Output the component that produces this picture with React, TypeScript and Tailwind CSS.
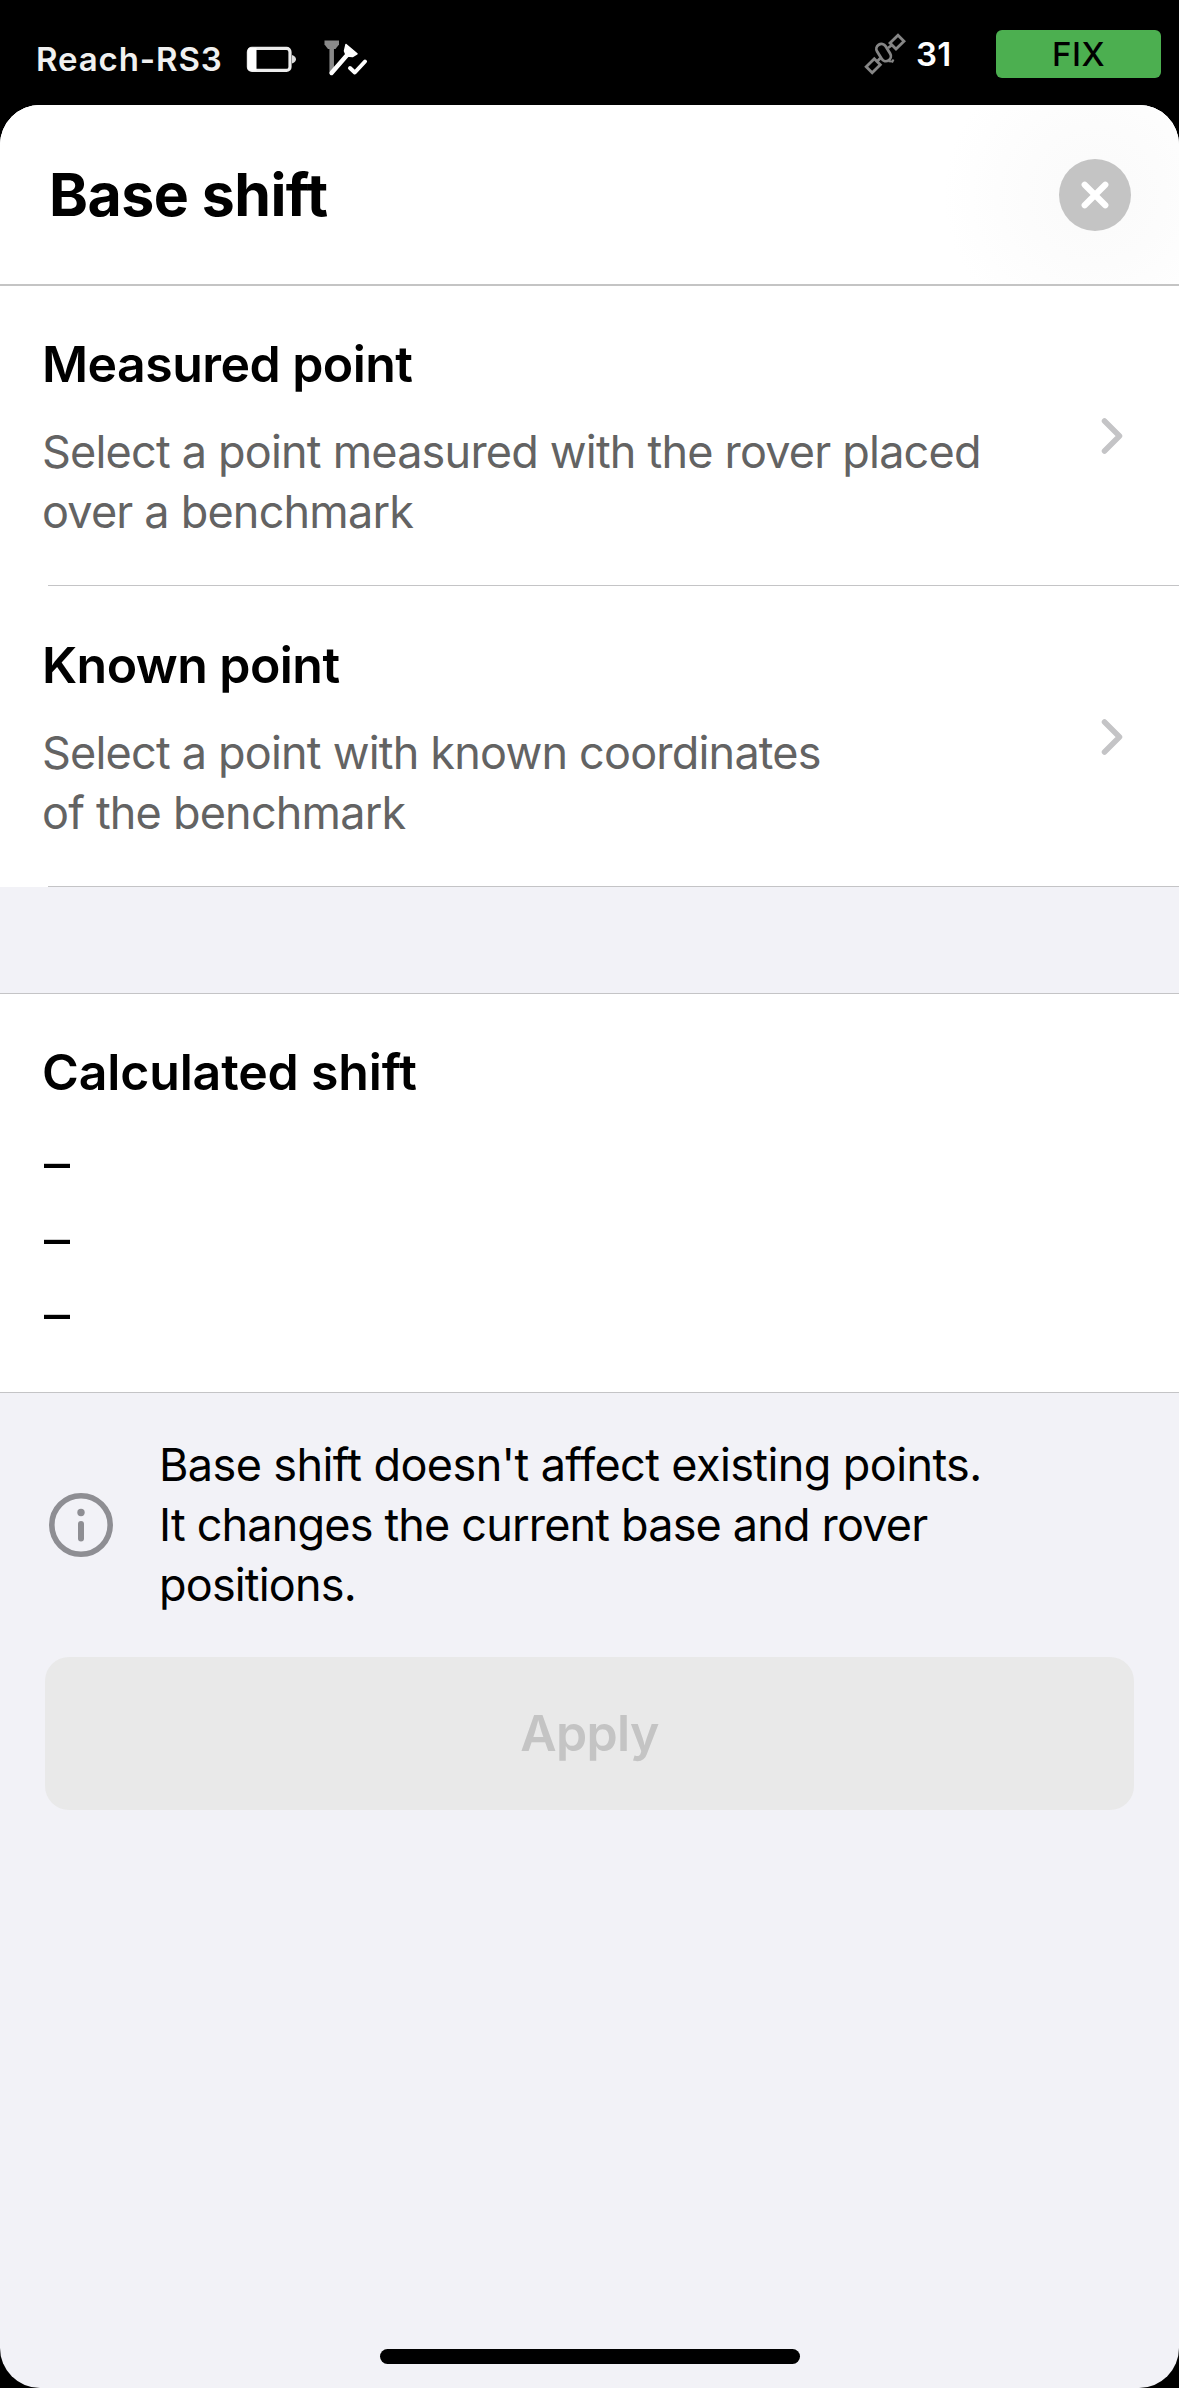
import React from 'react';

const BatteryIcon = () => (
  <svg width="50" height="26" viewBox="0 0 50 26" fill="none" className="shrink-0">
    <rect x="2.400" y="2.400" width="41.600" height="22" rx="3.500" stroke="#ececec" strokeWidth="3.200" />
    <path d="M4 2h6.500v22.500H4a2 2 0 0 1-2-2V4a2 2 0 0 1 2-2z" fill="#fff" />
    <path d="M46 9c2.500.8 4 2.400 4 4.200s-1.500 3.400-4 4.200z" fill="#ddd" />
  </svg>
);

const PoleIcon = () => (
  <svg width="46" height="40" viewBox="0 0 46 40" fill="none" strokeLinecap="round" strokeLinejoin="round" className="shrink-0">
    <path d="M0.500 1.500h14.500v4l-3.500 4.500H4L0.500 5.500z" fill="#8a8a8a" />
    <path d="M7.700 9v23" stroke="#8a8a8a" strokeWidth="4.500" />
    <path d="M22 5.500L33 14.800L28.500 17.500L22.500 17L20.500 12z" fill="#fff" stroke="#fff" strokeWidth="1.500" />
    <path d="M24 15L7.500 34" stroke="#fff" strokeWidth="4.400" />
    <path d="M26 29l4.800 4.500L41 22.500" stroke="#fff" strokeWidth="4" />
  </svg>
);

const SatelliteIcon = () => (
  <svg width="42" height="42" viewBox="0 0 42 42" fill="none" stroke="#868686" strokeWidth="2.800" className="shrink-0">
    <path d="M34 2.200L40 8.200L32 16L26 10z" />
    <path d="M10.300 25.800L16.300 31.800L8.200 39.800L2.200 33.800z" />
    <rect x="14.600" y="10.300" width="10" height="18.500" rx="5" transform="rotate(-32 19.600 19.500)" />
    <path d="M24 15l4-3M13.500 28l3-3" />
    <path d="M24.500 28.200l4 .3M29.500 26.500l-1.500 3" strokeWidth="2" />
  </svg>
);

const CloseIcon = () => (
  <svg width="28" height="28" viewBox="0 0 28 28" stroke="#fff" strokeWidth="6.200" strokeLinecap="round">
    <path d="M3.700 3.700l20.600 20.600M24.300 3.700L3.700 24.300" />
  </svg>
);

const Chevron = () => (
  <svg width="22" height="38" viewBox="0 0 22 38" fill="none" stroke="#c4c4c6" strokeWidth="5.500" strokeLinecap="round" strokeLinejoin="round">
    <path d="M3.500 4l15 15-15 15" />
  </svg>
);

const InfoIcon = () => (
  <svg width="64" height="64" viewBox="0 0 64 64" fill="none">
    <circle cx="32" cy="32" r="29.200" stroke="#8e8e93" strokeWidth="5.600" />
    <circle cx="32" cy="19.500" r="3.700" fill="#8e8e93" />
    <path d="M32 31v14.500" stroke="#8e8e93" strokeWidth="6" strokeLinecap="round" />
  </svg>
);

const points = [
  {
    title: 'Measured point',
    lines: ['Select a point measured with the rover placed', 'over a benchmark'],
    row: 'h-[299px]',
  },
  {
    title: 'Known point',
    lines: ['Select a point with known coordinates', 'of the benchmark'],
    row: 'h-[300px] pt-px',
  },
];

const App = () => {
  return (
    <div className="w-[1179px] h-[2388px] bg-black flex flex-col font-['Inter',sans-serif] text-black whitespace-nowrap">
      {/* Status bar */}
      <div className="h-[105px] shrink-0 flex items-start text-white">
        <div className="flex items-center pl-9 pt-[39px]">
          <span className="w-[210px] text-[33px] leading-10 font-semibold tracking-[0.9px] text-[#f0f0f0]">Reach-RS3</span>
          <BatteryIcon />
          <div className="ml-7">
            <PoleIcon />
          </div>
        </div>
        <div className="ml-auto flex items-start pt-[30px] pr-[18px]">
          <div className="pt-[3px]">
            <SatelliteIcon />
          </div>
          <span className="ml-2.5 w-20 text-[33px] leading-12 font-semibold tracking-[0.3px]">31</span>
          <div className="w-[165px] h-12 rounded-md bg-[#4caf50] text-black text-[33px] leading-12 font-medium tracking-[0.5px] text-center">FIX</div>
        </div>
      </div>

      <div className="flex-grow flex flex-col bg-[#f2f2f7] rounded-[40px] overflow-hidden">
        <header className="h-[181px] shrink-0 flex items-center justify-between bg-white bg-[radial-gradient(circle_at_1094px_90px,#fafafa_0px,#fcfcfc_70px,#ffffff_150px)] border-b-2 border-[#c4c4c4] pl-[49px] pr-12">
          <h1 className="pt-0.5 text-[59px] font-bold tracking-[-0.55px]">Base shift</h1>
          <button className="size-[72px] rounded-full bg-[#c4c4c4] flex items-center justify-center">
            <CloseIcon />
          </button>
        </header>

        <section className="bg-white">
          {points.map((point) => (
            <div key={point.title}>
              <div className={`${point.row} flex items-center justify-between pl-[42px] pr-14`}>
                <div className="pt-1">
                  <h2 className="text-[50px] leading-[60px] font-semibold tracking-[-0.55px]">{point.title}</h2>
                  <p className="mt-7 text-[45px] leading-[60px] tracking-[-0.8px] text-[#636363]">
                    {point.lines[0]}
                    <br />
                    {point.lines[1]}
                  </p>
                </div>
                <Chevron />
              </div>
              <div className="ml-12 h-px bg-[#c4c4c6]" />
            </div>
          ))}
        </section>

        {/* Calculated shift */}
        <section className="mt-[106px] h-[400px] shrink-0 bg-white border-y border-[#c4c4c6] pl-[42px] pt-12">
          <h2 className="text-[50px] leading-[60px] font-semibold tracking-[-0.15px]">Calculated shift</h2>
          <div className="mt-6 pl-0.5 text-[52px] leading-[75.5px]">
            <div>–</div>
            <div>–</div>
            <div>–</div>
          </div>
        </section>

        <div className="flex items-center pl-[49px] pt-[42px]">
          <InfoIcon />
          <p className="ml-[46px] text-[45px] leading-[60px] tracking-[-0.83px]">
            <span className="tracking-[-0.6px]">Base shift doesn't affect existing points.</span>
            <br />
            It changes the current base and rover
            <br />
            positions.
          </p>
        </div>

        <button className="mx-[45px] mt-[42px] h-[153px] shrink-0 rounded-3xl bg-[#e9e9e9] text-[#c4c4c4] text-[50px] font-semibold tracking-[-0.6px]">
          Apply
        </button>

        <div className="mt-auto mb-6 self-center w-[420px] h-[15px] rounded-full bg-black" />
      </div>
    </div>
  );
};

export default App;
